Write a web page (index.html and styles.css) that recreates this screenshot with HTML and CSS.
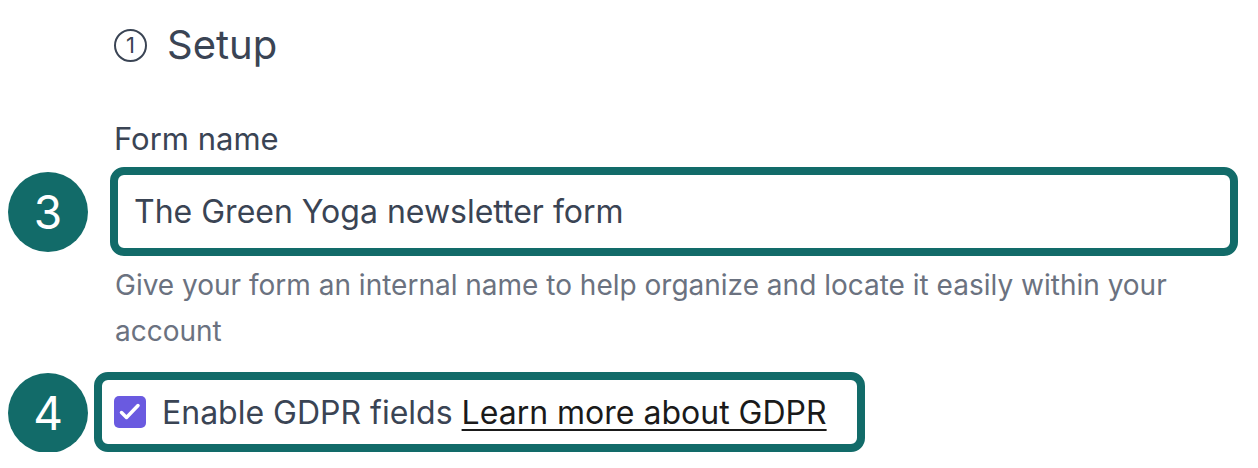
FILE: index.html
```html
<!DOCTYPE html>
<html>
<head>
    <title>Setup</title>
    <link rel="stylesheet" href="styles.css">
</head>
<body>
    <div class="page">
        <h1 class="section-title"><span class="step-num">1</span>Setup</h1>

        <label class="field-label" for="form-name">Form name</label>
        <div class="row row-input">
            <span class="badge badge-input">3</span>
            <input type="text" id="form-name" class="text-input" value="The Green Yoga newsletter form">
        </div>
        <p class="help">Give your form an internal name to help organize and locate it easily within your account</p>

        <div class="row row-gdpr">
            <span class="badge badge-gdpr">4</span>
            <div class="gdpr-box">
                <span class="checkbox">
                    <svg width="32" height="32" viewBox="0 0 32 32"><path d="M7.5 16.5l5 5 11.5-12" fill="none" stroke="#fff" stroke-width="3.5" stroke-linecap="round" stroke-linejoin="round"/></svg>
                </span>
                <span class="gdpr-text">Enable GDPR fields <a href="#">Learn more about GDPR</a></span>
            </div>
        </div>
    </div>
</body>
</html>
```

FILE: styles.css
```css
body {
    margin: 0;
    font-family: Inter, "Noto Sans", sans-serif;
    background: #fff;
    color: #3a4454;
}

.page {
    padding: 22px 0 0 114px;
}

.section-title {
    margin: 0;
    display: flex;
    align-items: center;
    gap: 20px;
    font-size: 40px;
    font-weight: 400;
    line-height: 46px;
    color: #3a4454;
}

.step-num {
    width: 29px;
    height: 29px;
    border: 2px solid #3a4454;
    border-radius: 50%;
    display: flex;
    align-items: center;
    justify-content: center;
    font-size: 22px;
    line-height: 1;
}

.field-label {
    display: block;
    margin-top: 51px;
    font-size: 31px;
    line-height: 40px;
    color: #3a4454;
}

.row {
    position: relative;
}

.row-input {
    margin-top: 8px;
}

.row-gdpr {
    margin-top: 18px;
}

.badge {
    position: absolute;
    left: -106px;
    width: 80px;
    height: 80px;
    border-radius: 50%;
    background: #126b69;
    color: #fff;
    font-size: 46px;
    display: flex;
    align-items: center;
    justify-content: center;
}

.badge-input {
    top: 5px;
}

.badge-gdpr {
    top: 1px;
}

.text-input {
    display: block;
    box-sizing: border-box;
    width: 1128px;
    height: 89px;
    margin-left: -4px;
    padding: 0 16px;
    border: 8px solid #126b69;
    border-radius: 14px;
    font-family: inherit;
    font-size: 32px;
    color: #3a4454;
    outline: none;
}

.help {
    margin: 6px 0 0 1px;
    width: 1100px;
    font-size: 28px;
    line-height: 46px;
    color: #6b7280;
}

.gdpr-box {
    display: inline-flex;
    align-items: center;
    gap: 16px;
    box-sizing: border-box;
    height: 80px;
    margin-left: -20px;
    padding: 0 30px 0 12px;
    border: 8px solid #126b69;
    border-radius: 14px;
}

.checkbox {
    width: 32px;
    height: 32px;
    border-radius: 5px;
    background: #6a5ae0;
    display: flex;
    align-items: center;
    justify-content: center;
}

.gdpr-text {
    font-size: 32px;
    color: #3a4454;
}

.gdpr-text a {
    color: #1a1a1a;
    text-decoration: underline;
    text-underline-offset: 5px;
    text-decoration-thickness: 2px;
}
```
